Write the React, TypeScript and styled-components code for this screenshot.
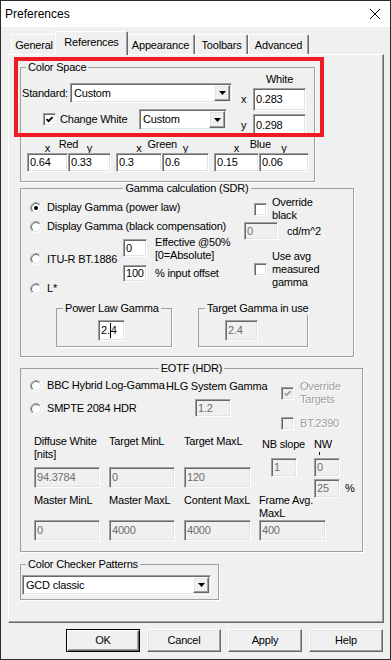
import React from 'react';
import styled, { createGlobalStyle, css } from 'styled-components';

const GlobalStyle = createGlobalStyle`
  * { box-sizing: border-box; }
  body { margin: 0; background: #f0f0f0; }
`;

const sunken = css`
  border: 1px solid;
  border-color: #a0a0a0 #fff #fff #a0a0a0;
  box-shadow: inset 1px 1px 0 #696969, inset -1px -1px 0 #e3e3e3;
`;

const raised = css`
  border: 1px solid;
  border-color: #fff #696969 #696969 #fff;
  box-shadow: inset -1px -1px 0 #a0a0a0, inset 1px 1px 0 #e3e3e3;
`;

const Window = styled.div`
  width: 391px;
  height: 660px;
  border: 1px solid #2b2b2b;
  background: #f0f0f0;
  font-family: "Liberation Sans", Arial, sans-serif;
  font-size: 11px;
  line-height: 13px;
  letter-spacing: -0.2px;
  color: #000;
  display: flex;
  flex-direction: column;
`;

const TitleBar = styled.div`
  height: 26px;
  flex: none;
  background: #fff;
  display: flex;
  align-items: center;
  justify-content: space-between;
  padding: 0 10px 0 4px;
  font-size: 12px;
  letter-spacing: 0;
`;

const TabStrip = styled.div`
  display: flex;
  align-items: flex-end;
  height: 23px;
  margin-top: 4px;
  padding-left: 10px;
  flex: none;
`;

const Tab = styled.div<{ $w: number; $active?: boolean }>`
  width: ${p => p.$w}px;
  height: 20px;
  flex: none;
  display: flex;
  align-items: center;
  justify-content: center;
  padding-top: 1px;
  background: #f0f0f0;
  border-top: 1px solid #fff;
  border-left: 1px solid #fff;
  border-right: 1px solid #696969;
  box-shadow: inset -1px 0 0 #a0a0a0;
  border-radius: 2px 2px 0 0;
  white-space: nowrap;
  ${p => p.$active && css`
    height: 24px;
    margin: 0 -2px -1px;
    padding: 0 0 3px;
    position: relative;
    z-index: 1;
  `}
`;

const Panel = styled.div`
  position: relative;
  flex: none;
  margin-left: 7px;
  width: 376px;
  height: 569px;
  border: 1px solid;
  border-color: #fff #696969 #696969 #fff;
  box-shadow: inset -1px -1px 0 #a0a0a0;
  padding-left: 11px;
  display: flex;
  flex-direction: column;
  align-items: flex-start;
`;

const Highlight = styled.div`
  position: absolute;
  left: 5px;
  top: 2px;
  width: 310px;
  height: 80px;
  border: 4px solid #ed1c24;
  z-index: 2;
  pointer-events: none;
`;

const Group = styled.fieldset<{ $w: number; $mt?: number; $ml?: number; $pb?: number }>`
  width: ${p => p.$w}px;
  min-width: 0;
  flex: none;
  margin: ${p => p.$mt ?? 0}px 0 0 ${p => p.$ml ?? 0}px;
  padding: 0 0 ${p => p.$pb ?? 0}px;
  border: 1px solid #a0a0a0;
  box-shadow: 1px 1px 0 #fff;
`;

const Legend = styled.legend<{ $ml?: number; $center?: boolean }>`
  padding: 0 2px;
  line-height: 13px;
  white-space: nowrap;
  ${p => p.$center
    ? css`margin-left: auto; margin-right: auto;`
    : css`margin-left: ${p.$ml ?? 0}px;`}
`;

const Field = styled.div<{ $w: number; $h: number; $mt?: number; $ml?: number; $off?: boolean }>`
  ${sunken};
  width: ${p => p.$w}px;
  height: ${p => p.$h}px;
  margin-top: ${p => p.$mt ?? 0}px;
  margin-left: ${p => p.$ml ?? 0}px;
  flex: none;
  display: flex;
  align-items: center;
  padding-left: 2px;
  white-space: nowrap;
  overflow: hidden;
  background: ${p => (p.$off ? '#f0f0f0' : '#fff')};
  color: ${p => (p.$off ? '#6d6d6d' : '#000')};
`;

const Caret = styled.span`
  display: inline-block;
  width: 1px;
  height: 15px;
  background: #000;
`;

const ComboBox = styled.div<{ $w: number; $h: number; $mt?: number; $ml?: number }>`
  ${sunken};
  width: ${p => p.$w}px;
  height: ${p => p.$h}px;
  margin: ${p => p.$mt ?? 0}px 0 0 ${p => p.$ml ?? 0}px;
  flex: none;
  display: flex;
  align-items: center;
  justify-content: space-between;
  background: #fff;
  padding: 1px 1px 1px 3px;
`;

const ComboButton = styled.span`
  ${raised};
  width: 16px;
  align-self: stretch;
  background: #f0f0f0;
  display: flex;
  align-items: center;
  justify-content: center;
`;

const Combo = ({ value, w, h, mt, ml }: { value: string; w: number; h: number; mt?: number; ml?: number }) => (
  <ComboBox $w={w} $h={h} $mt={mt} $ml={ml}>
    <span>{value}</span>
    <ComboButton>
      <svg width="7" height="4" viewBox="0 0 7 4">
        <polygon points="0,0 7,0 3.5,4" fill="#000" />
      </svg>
    </ComboButton>
  </ComboBox>
);

const CheckBoxBox = styled.span<{ $off?: boolean }>`
  ${sunken};
  width: 13px;
  height: 13px;
  flex: none;
  display: flex;
  align-items: center;
  justify-content: center;
  background: ${p => (p.$off ? '#f0f0f0' : '#fff')};
`;

const CheckBox = ({ checked, off }: { checked?: boolean; off?: boolean }) => (
  <CheckBoxBox $off={off}>
    {checked && (
      <svg width="7" height="7" viewBox="0 0 7 7">
        <path d="M0.6 3.1 L2.6 5.2 L6.6 1.1" fill="none" stroke={off ? '#a0a0a0' : '#000'} strokeWidth="1.8" />
      </svg>
    )}
  </CheckBoxBox>
);

const RadioSvg = styled.svg`
  flex: none;
  display: block;
`;

const Radio = ({ on }: { on?: boolean }) => (
  <RadioSvg width="12" height="12" viewBox="0 0 12 12">
    <defs>
      <linearGradient id="radOuter" x1="0" y1="0" x2="1" y2="1">
        <stop offset="0.5" stopColor="#a0a0a0" />
        <stop offset="0.5" stopColor="#fff" />
      </linearGradient>
      <linearGradient id="radInner" x1="0" y1="0" x2="1" y2="1">
        <stop offset="0.5" stopColor="#696969" />
        <stop offset="0.5" stopColor="#e3e3e3" />
      </linearGradient>
    </defs>
    <circle cx="6" cy="6" r="5.5" fill="none" stroke="url(#radOuter)" />
    <circle cx="6" cy="6" r="4.5" fill="#fff" stroke="url(#radInner)" />
    {on && <circle cx="6" cy="6" r="2" fill="#000" />}
  </RadioSvg>
);

const Caption = styled.span<{ $off?: boolean; $w?: number; $ml?: number; $mt?: number }>`
  display: block;
  flex: none;
  white-space: nowrap;
  ${p => p.$w !== undefined && css`width: ${p.$w}px;`}
  margin-left: ${p => p.$ml ?? 0}px;
  margin-top: ${p => p.$mt ?? 0}px;
  color: ${p => (p.$off ? '#a0a0a0' : '#000')};
  ${p => p.$off && css`text-shadow: 1px 1px 0 #fff;`}
`;

const OptionRow = styled.div<{ $h: number; $mt?: number; $w?: number }>`
  display: flex;
  align-items: center;
  gap: 5px;
  flex: none;
  height: ${p => p.$h}px;
  margin-top: ${p => p.$mt ?? 0}px;
  ${p => p.$w !== undefined && css`width: ${p.$w}px;`}
  padding-left: 9px;
  white-space: nowrap;
`;

const CheckRow = styled.div<{ $h: number; $mt?: number; $pl?: number; $gap?: number }>`
  display: flex;
  align-items: center;
  height: ${p => p.$h}px;
  margin-top: ${p => p.$mt ?? 0}px;
  padding-left: ${p => p.$pl ?? 0}px;
  gap: ${p => p.$gap ?? 5}px;
`;

/* Color space */
const CsTop = styled.div`
  display: flex;
`;

const CsLeft = styled.div`
  width: 211px;
  padding-top: 9px;
  display: flex;
  flex-direction: column;
`;

const CsRow = styled.div<{ $h: number; $mt?: number }>`
  display: flex;
  align-items: center;
  height: ${p => p.$h}px;
  margin-top: ${p => p.$mt ?? 0}px;
`;

const CsRight = styled.div`
  display: flex;
  flex-direction: column;
`;

const WhiteTitle = styled.div`
  margin: -1px 0 0 21px;
  width: 53px;
  text-align: center;
`;

const CoordRow = styled.div<{ $mt: number }>`
  display: flex;
  align-items: center;
  margin-top: ${p => p.$mt}px;
`;

const Axis = styled.span`
  width: 21px;
  padding-left: 9px;
`;

const Primaries = styled.div`
  display: flex;
  gap: 5px;
  margin: 1px 0 0 6px;
`;

const PrimaryHead = styled.div<{ $a: number; $b: number }>`
  display: grid;
  grid-template-columns: ${p => p.$a / 2}px ${p => p.$a / 2}px ${p => p.$b / 2}px ${p => p.$b / 2}px;
  height: 15px;
`;

const HeadAxis = styled.span<{ $col: string }>`
  grid-column: ${p => p.$col};
  grid-row: 1;
  text-align: center;
  margin-top: 4px;
`;

const HeadName = styled.span`
  grid-column: 2 / 4;
  grid-row: 1;
  text-align: center;
`;

const FieldPair = styled.div`
  display: flex;
`;

const Primary = ({ name, a, b, x, y }: { name: string; a: number; b: number; x: string; y: string }) => (
  <div>
    <PrimaryHead $a={a} $b={b}>
      <HeadAxis $col="1 / 3">x</HeadAxis>
      <HeadName>{name}</HeadName>
      <HeadAxis $col="3 / 5">y</HeadAxis>
    </PrimaryHead>
    <FieldPair>
      <Field $w={a} $h={19}>{x}</Field>
      <Field $w={b} $h={19}>{y}</Field>
    </FieldPair>
  </div>
);

/* Gamma */
const SplitRow = styled.div`
  display: flex;
  align-items: flex-start;
`;

const Column = styled.div<{ $w?: number }>`
  display: flex;
  flex-direction: column;
  flex: none;
  ${p => p.$w !== undefined && css`width: ${p.$w}px;`}
`;

const ItuBlock = styled.div`
  display: flex;
  align-items: center;
  height: 46px;
`;

const NoteStack = styled.div`
  display: flex;
  flex-direction: column;
  align-self: flex-start;
  margin-left: 8px;
`;

const SubGroups = styled.div`
  display: flex;
  margin-top: 7px;
`;

/* EOTF */
const ValueRow = styled.div<{ $mt: number; $h?: number }>`
  display: flex;
  align-items: flex-start;
  padding-left: 13px;
  margin-top: ${p => p.$mt}px;
  ${p => p.$h !== undefined && css`height: ${p.$h}px;`}
`;

const ValueCell = styled.div<{ $w: number; $ml?: number; $mt?: number }>`
  display: flex;
  flex-direction: column;
  flex: none;
  width: ${p => p.$w}px;
  margin-left: ${p => p.$ml ?? 0}px;
  margin-top: ${p => p.$mt ?? 0}px;
`;

const CellLabel = styled.div<{ $h: number; $ml?: number }>`
  height: ${p => p.$h}px;
  margin-left: ${p => p.$ml ?? 0}px;
  white-space: nowrap;
`;

const Tick = styled.span`
  width: 1px;
  height: 3px;
  background: #000;
  margin: 1px 0 3px 5px;
`;

/* Buttons */
const ButtonRow = styled.div`
  display: flex;
  justify-content: flex-end;
  gap: 7px;
  padding-right: 7px;
  margin-top: 6px;
`;

const Button = styled.div<{ $default?: boolean }>`
  width: 74px;
  height: 23px;
  display: flex;
  align-items: center;
  justify-content: center;
  background: #f0f0f0;
  ${p => p.$default
    ? css`
        border: 1px solid #000;
        box-shadow: inset 1px 1px 0 #fff, inset -1px -1px 0 #696969, inset -2px -2px 0 #a0a0a0;
      `
    : raised}
`;

export default function App() {
  return (
    <>
      <GlobalStyle />
      <Window>
        <TitleBar>
          <span>Preferences</span>
          <svg width="10" height="10" viewBox="0 0 10 10">
            <path d="M0 0 L10 10 M10 0 L0 10" stroke="#000" strokeWidth="1" />
          </svg>
        </TitleBar>

        <TabStrip>
          <Tab $w={46}>General</Tab>
          <Tab $w={73} $active>References</Tab>
          <Tab $w={69}>Appearance</Tab>
          <Tab $w={53}>Toolbars</Tab>
          <Tab $w={61}>Advanced</Tab>
        </TabStrip>

        <Panel>
          <Highlight />

          <Group $w={295} $mt={6} $pb={9}>
            <Legend $ml={5}>Color Space</Legend>
            <CsTop>
              <CsLeft>
                <CsRow $h={20}>
                  <Caption $w={48} $ml={1}>Standard:</Caption>
                  <Combo value="Custom" w={162} h={20} />
                </CsRow>
                <CsRow $h={21} $mt={6}>
                  <Caption $ml={22} />
                  <CheckBox checked />
                  <Caption $w={79} $ml={4}>Change White</Caption>
                  <Combo value="Custom" w={88} h={21} />
                </CsRow>
              </CsLeft>
              <CsRight>
                <WhiteTitle>White</WhiteTitle>
                <CoordRow $mt={2}>
                  <Axis>x</Axis>
                  <Field $w={53} $h={23}>0.283</Field>
                </CoordRow>
                <CoordRow $mt={3}>
                  <Axis>y</Axis>
                  <Field $w={53} $h={23}>0.298</Field>
                </CoordRow>
              </CsRight>
            </CsTop>
            <Primaries>
              <Primary name="Red" a={41} b={43} x="0.64" y="0.33" />
              <Primary name="Green" a={46} b={47} x="0.3" y="0.6" />
              <Primary name="Blue" a={45} b={50} x="0.15" y="0.06" />
            </Primaries>
          </Group>

          <Group $w={334} $pb={9}>
            <Legend $center>Gamma calculation (SDR)</Legend>
            <SplitRow>
              <Column $w={223}>
                <OptionRow $h={19} $mt={3}>
                  <Radio on />
                  <span>Display Gamma (power law)</span>
                </OptionRow>
                <OptionRow $h={19}>
                  <Radio />
                  <span>Display Gamma (black compensation)</span>
                </OptionRow>
                <ItuBlock>
                  <OptionRow $h={13} $w={102}>
                    <Radio />
                    <span>ITU-R BT.1886</span>
                  </OptionRow>
                  <Column $w={24}>
                    <Field $w={24} $h={18} $mt={3}>0</Field>
                    <Field $w={24} $h={17} $mt={8}>100</Field>
                  </Column>
                  <NoteStack>
                    <span>Effective @50%</span>
                    <span>[0=Absolute]</span>
                    <Caption $mt={5}>% input offset</Caption>
                  </NoteStack>
                </ItuBlock>
                <OptionRow $h={13}>
                  <Radio />
                  <span>L*</span>
                </OptionRow>
              </Column>
              <Column>
                <CheckRow $h={26} $mt={1} $pl={10}>
                  <CheckBox />
                  <span>Override<br />black</span>
                </CheckRow>
                <CheckRow $h={18} $gap={9}>
                  <Field $w={34} $h={18} $off>0</Field>
                  <span>cd/m^2</span>
                </CheckRow>
                <CheckRow $h={39} $mt={10} $pl={10}>
                  <CheckBox />
                  <span>Use avg<br />measured<br />gamma</span>
                </CheckRow>
              </Column>
            </SplitRow>
            <SubGroups>
              <Group $w={116} $ml={35} $pb={5}>
                <Legend $ml={6}>Power Law Gamma</Legend>
                <Field $w={27} $h={21} $mt={5} $ml={41}>
                  2.<Caret />4
                </Field>
              </Group>
              <Group $w={110} $ml={26} $pb={5}>
                <Legend $ml={6}>Target Gamma in use</Legend>
                <Field $w={33} $h={21} $mt={5} $ml={26} $off>2.4</Field>
              </Group>
            </SubGroups>
          </Group>

          <Group $w={343} $mt={5} $pb={10}>
            <Legend $center>EOTF (HDR)</Legend>
            <SplitRow>
              <Column $w={145}>
                <OptionRow $h={13} $mt={4}>
                  <Radio />
                  <span>BBC Hybrid Log-Gamma</span>
                </OptionRow>
                <OptionRow $h={13} $mt={10}>
                  <Radio />
                  <span>SMPTE 2084 HDR</span>
                </OptionRow>
              </Column>
              <Column $w={115}>
                <Caption $mt={5}>HLG System Gamma</Caption>
                <Field $w={36} $h={18} $mt={6} $ml={29} $off>1.2</Field>
              </Column>
              <Column>
                <CheckRow $h={26} $mt={5} $gap={6}>
                  <CheckBox checked off />
                  <Caption $off>Override<br />Targets</Caption>
                </CheckRow>
                <CheckRow $h={13} $mt={11} $gap={6}>
                  <CheckBox off />
                  <Caption $off>BT.2390</Caption>
                </CheckRow>
              </Column>
            </SplitRow>
            <ValueRow $mt={5} $h={53}>
              <ValueCell $w={66}>
                <CellLabel $h={26}>Diffuse White<br />[nits]</CellLabel>
                <Field $w={66} $h={21} $mt={6} $off>94.3784</Field>
              </ValueCell>
              <ValueCell $w={66} $ml={9}>
                <CellLabel $h={26}>Target MinL</CellLabel>
                <Field $w={66} $h={21} $mt={6} $off>0</Field>
              </ValueCell>
              <ValueCell $w={67} $ml={9}>
                <CellLabel $h={26}>Target MaxL</CellLabel>
                <Field $w={67} $h={21} $mt={6} $off>120</Field>
              </ValueCell>
              <ValueCell $w={26} $ml={20} $mt={3}>
                <CellLabel $h={13} $ml={-9}>NB slope</CellLabel>
                <Field $w={26} $h={19} $mt={7} $off>1</Field>
              </ValueCell>
              <ValueCell $w={26} $ml={17} $mt={3}>
                <CellLabel $h={13}>NW</CellLabel>
                <Tick />
                <Field $w={26} $h={19} $off>0</Field>
                <Field $w={26} $h={19} $mt={2} $off>25</Field>
              </ValueCell>
              <Caption $ml={5} $mt={47}>%</Caption>
            </ValueRow>
            <ValueRow $mt={6}>
              <ValueCell $w={66}>
                <CellLabel $h={26}>Master MinL</CellLabel>
                <Field $w={66} $h={21} $off>0</Field>
              </ValueCell>
              <ValueCell $w={66} $ml={9}>
                <CellLabel $h={26}>Master MaxL</CellLabel>
                <Field $w={66} $h={21} $off>4000</Field>
              </ValueCell>
              <ValueCell $w={67} $ml={9}>
                <CellLabel $h={26}>Content MaxL</CellLabel>
                <Field $w={67} $h={21} $off>4000</Field>
              </ValueCell>
              <ValueCell $w={67} $ml={8}>
                <CellLabel $h={26}>Frame Avg.<br />MaxL</CellLabel>
                <Field $w={67} $h={21} $off>400</Field>
              </ValueCell>
            </ValueRow>
          </Group>

          <Group $w={199} $mt={6} $pb={4}>
            <Legend $ml={5}>Color Checker Patterns</Legend>
            <Combo value="GCD classic" w={189} h={20} mt={4} ml={1} />
          </Group>
        </Panel>

        <ButtonRow>
          <Button $default>OK</Button>
          <Button>Cancel</Button>
          <Button>Apply</Button>
          <Button>Help</Button>
        </ButtonRow>
      </Window>
    </>
  );
}
